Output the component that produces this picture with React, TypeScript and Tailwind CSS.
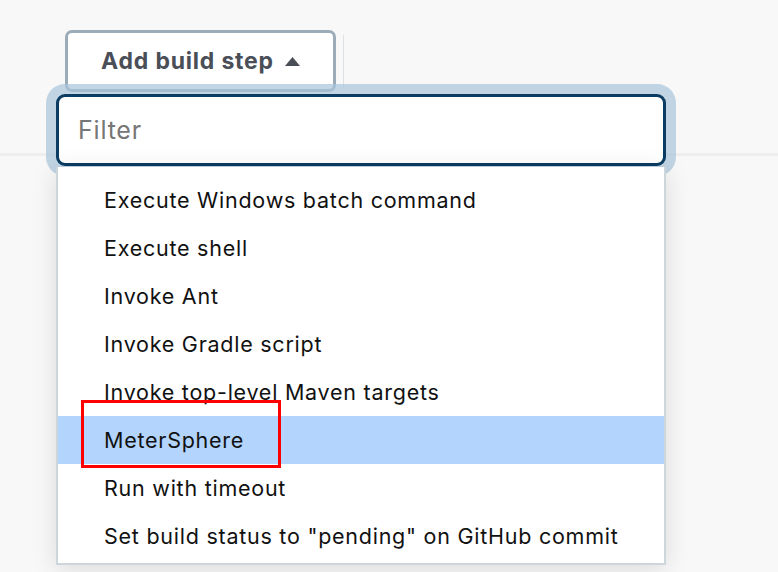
import React from 'react';

const items = [
    'Execute Windows batch command',
    'Execute shell',
    'Invoke Ant',
    'Invoke Gradle script',
    'Invoke top-level Maven targets',
    'MeterSphere',
    'Run with timeout',
    'Set build status to "pending" on GitHub commit',
];

const App: React.FC = () => {
    return (
        <div className="relative w-[778px] h-[572px] overflow-hidden bg-[#f8f8f8] font-['Inter','Liberation_Sans',sans-serif]">
            <div className="flex items-start pt-[30px] pl-[65px]">
                <button className="flex items-center justify-center gap-[11px] w-[271px] h-[62px] border-[3px] border-[#9babb7] rounded-[7px] bg-white text-[23px] tracking-[0.8px] font-bold text-[#4a4e57]">
                    Add build step
                    <svg width="15" height="9" viewBox="0 0 15 9"><path d="M0 9 L7.5 0 L15 9 Z" fill="#4a4e57" /></svg>
                </button>
                <div className="w-px h-[54px] ml-[7px] mt-[5px] bg-[#dce1e5]" />
            </div>
            <div className="mt-[61px] h-[3px] bg-[#eeeeee]" />

            {/* dropdown menu over the page */}
            <div className="absolute left-[46px] top-[84px] flex flex-col">
                <div className="p-[10px] rounded-[19px] bg-[#a9c4dc]/70">
                    <input
                        placeholder="Filter"
                        className="block w-[610px] h-[72px] pl-[19px] border-[3px] border-[#0b3c61] rounded-[9px] bg-white text-[25px] tracking-[0.8px] text-[#222] placeholder:text-[#767676] outline-none"
                    />
                </div>
                <div className="relative z-10 -mt-[9px] ml-[10px] w-[610px] pt-[9px] pb-[3px] bg-white border-2 border-t-0 border-[#cdd6da] shadow-[0_4px_24px_rgba(0,0,0,0.12)]">
                    {items.map(item => (
                        <div
                            key={item}
                            className={`relative flex items-center h-[48px] pl-[46px] text-[21.5px] tracking-[0.75px] text-[#111] ${item === 'MeterSphere' ? 'bg-[#b3d4fc]' : ''}`}
                        >
                            {item}
                            {item === 'MeterSphere' && (
                                <div className="absolute left-[23px] -top-[16px] w-[200px] h-[68px] border-[3px] border-[#ff0000]" />
                            )}
                        </div>
                    ))}
                </div>
            </div>
        </div>
    );
};

export default App;
